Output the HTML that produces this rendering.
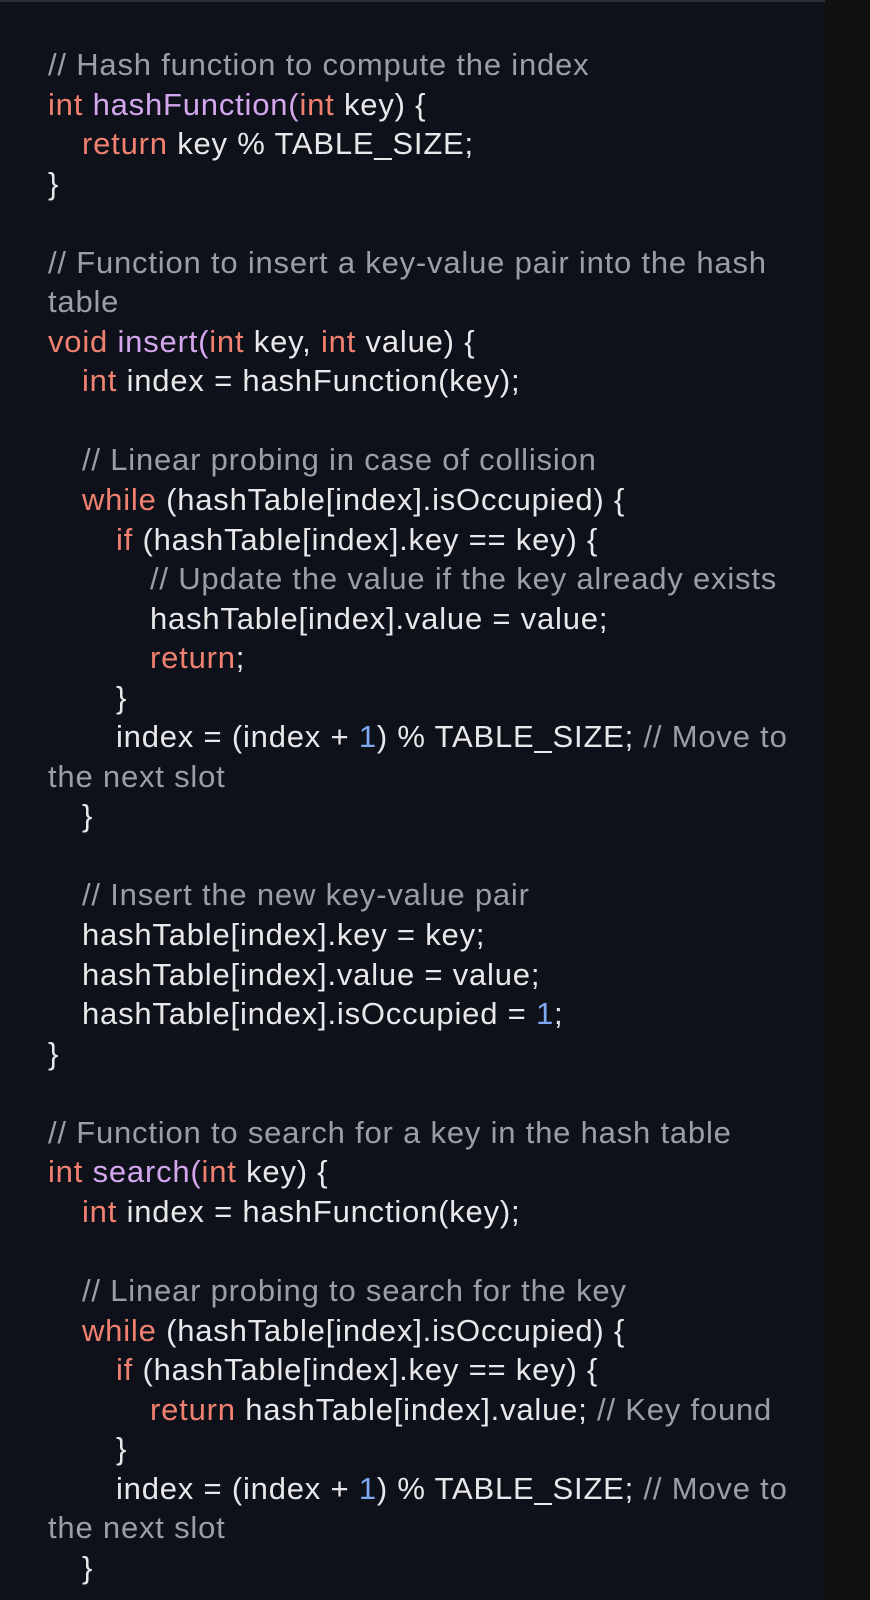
<!DOCTYPE html>
<html><head><meta charset="utf-8"><style>
html,body{margin:0;padding:0;width:870px;height:1600px;overflow:hidden;background:#101010;}
.p{position:absolute;left:0;top:0;width:825px;height:1600px;background:#0e111a;border-top:2px solid #2a2d36;box-sizing:border-box;}
.c{position:absolute;left:48px;top:45px;width:800px;font-family:"Liberation Sans",sans-serif;font-size:31px;letter-spacing:0.8px;line-height:39.55px;color:#e8e8ea;white-space:pre;}
.m{color:#9a9ea6}.k{color:#f0806f}.f{color:#d4a6ee}.n{color:#7fa8f2}
.a{display:inline-block;width:34px}.b{display:inline-block;width:68px}.d{display:inline-block;width:102px}
</style></head><body><div class="p"></div><div class="c"><span class="m">// Hash function to compute the index</span>
<span class="k">int</span> <span class="f">hashFunction(</span><span class="k">int</span> key) {
<span class="a"></span><span class="k">return</span> key % TABLE_SIZE;
}

<span class="m">// Function to insert a key-value pair into the hash</span>
<span class="m">table</span>
<span class="k">void</span> <span class="f">insert(</span><span class="k">int</span> key, <span class="k">int</span> value) {
<span class="a"></span><span class="k">int</span> index = hashFunction(key);

<span class="a"></span><span class="m">// Linear probing in case of collision</span>
<span class="a"></span><span class="k">while</span> (hashTable[index].isOccupied) {
<span class="b"></span><span class="k">if</span> (hashTable[index].key == key) {
<span class="d"></span><span class="m">// Update the value if the key already exists</span>
<span class="d"></span>hashTable[index].value = value;
<span class="d"></span><span class="k">return</span>;
<span class="b"></span>}
<span class="b"></span>index = (index + <span class="n">1</span>) % TABLE_SIZE; <span class="m">// Move to</span>
<span class="m">the next slot</span>
<span class="a"></span>}

<span class="a"></span><span class="m">// Insert the new key-value pair</span>
<span class="a"></span>hashTable[index].key = key;
<span class="a"></span>hashTable[index].value = value;
<span class="a"></span>hashTable[index].isOccupied = <span class="n">1</span>;
}

<span class="m">// Function to search for a key in the hash table</span>
<span class="k">int</span> <span class="f">search(</span><span class="k">int</span> key) {
<span class="a"></span><span class="k">int</span> index = hashFunction(key);

<span class="a"></span><span class="m">// Linear probing to search for the key</span>
<span class="a"></span><span class="k">while</span> (hashTable[index].isOccupied) {
<span class="b"></span><span class="k">if</span> (hashTable[index].key == key) {
<span class="d"></span><span class="k">return</span> hashTable[index].value; <span class="m">// Key found</span>
<span class="b"></span>}
<span class="b"></span>index = (index + <span class="n">1</span>) % TABLE_SIZE; <span class="m">// Move to</span>
<span class="m">the next slot</span>
<span class="a"></span>}</div></body></html>
